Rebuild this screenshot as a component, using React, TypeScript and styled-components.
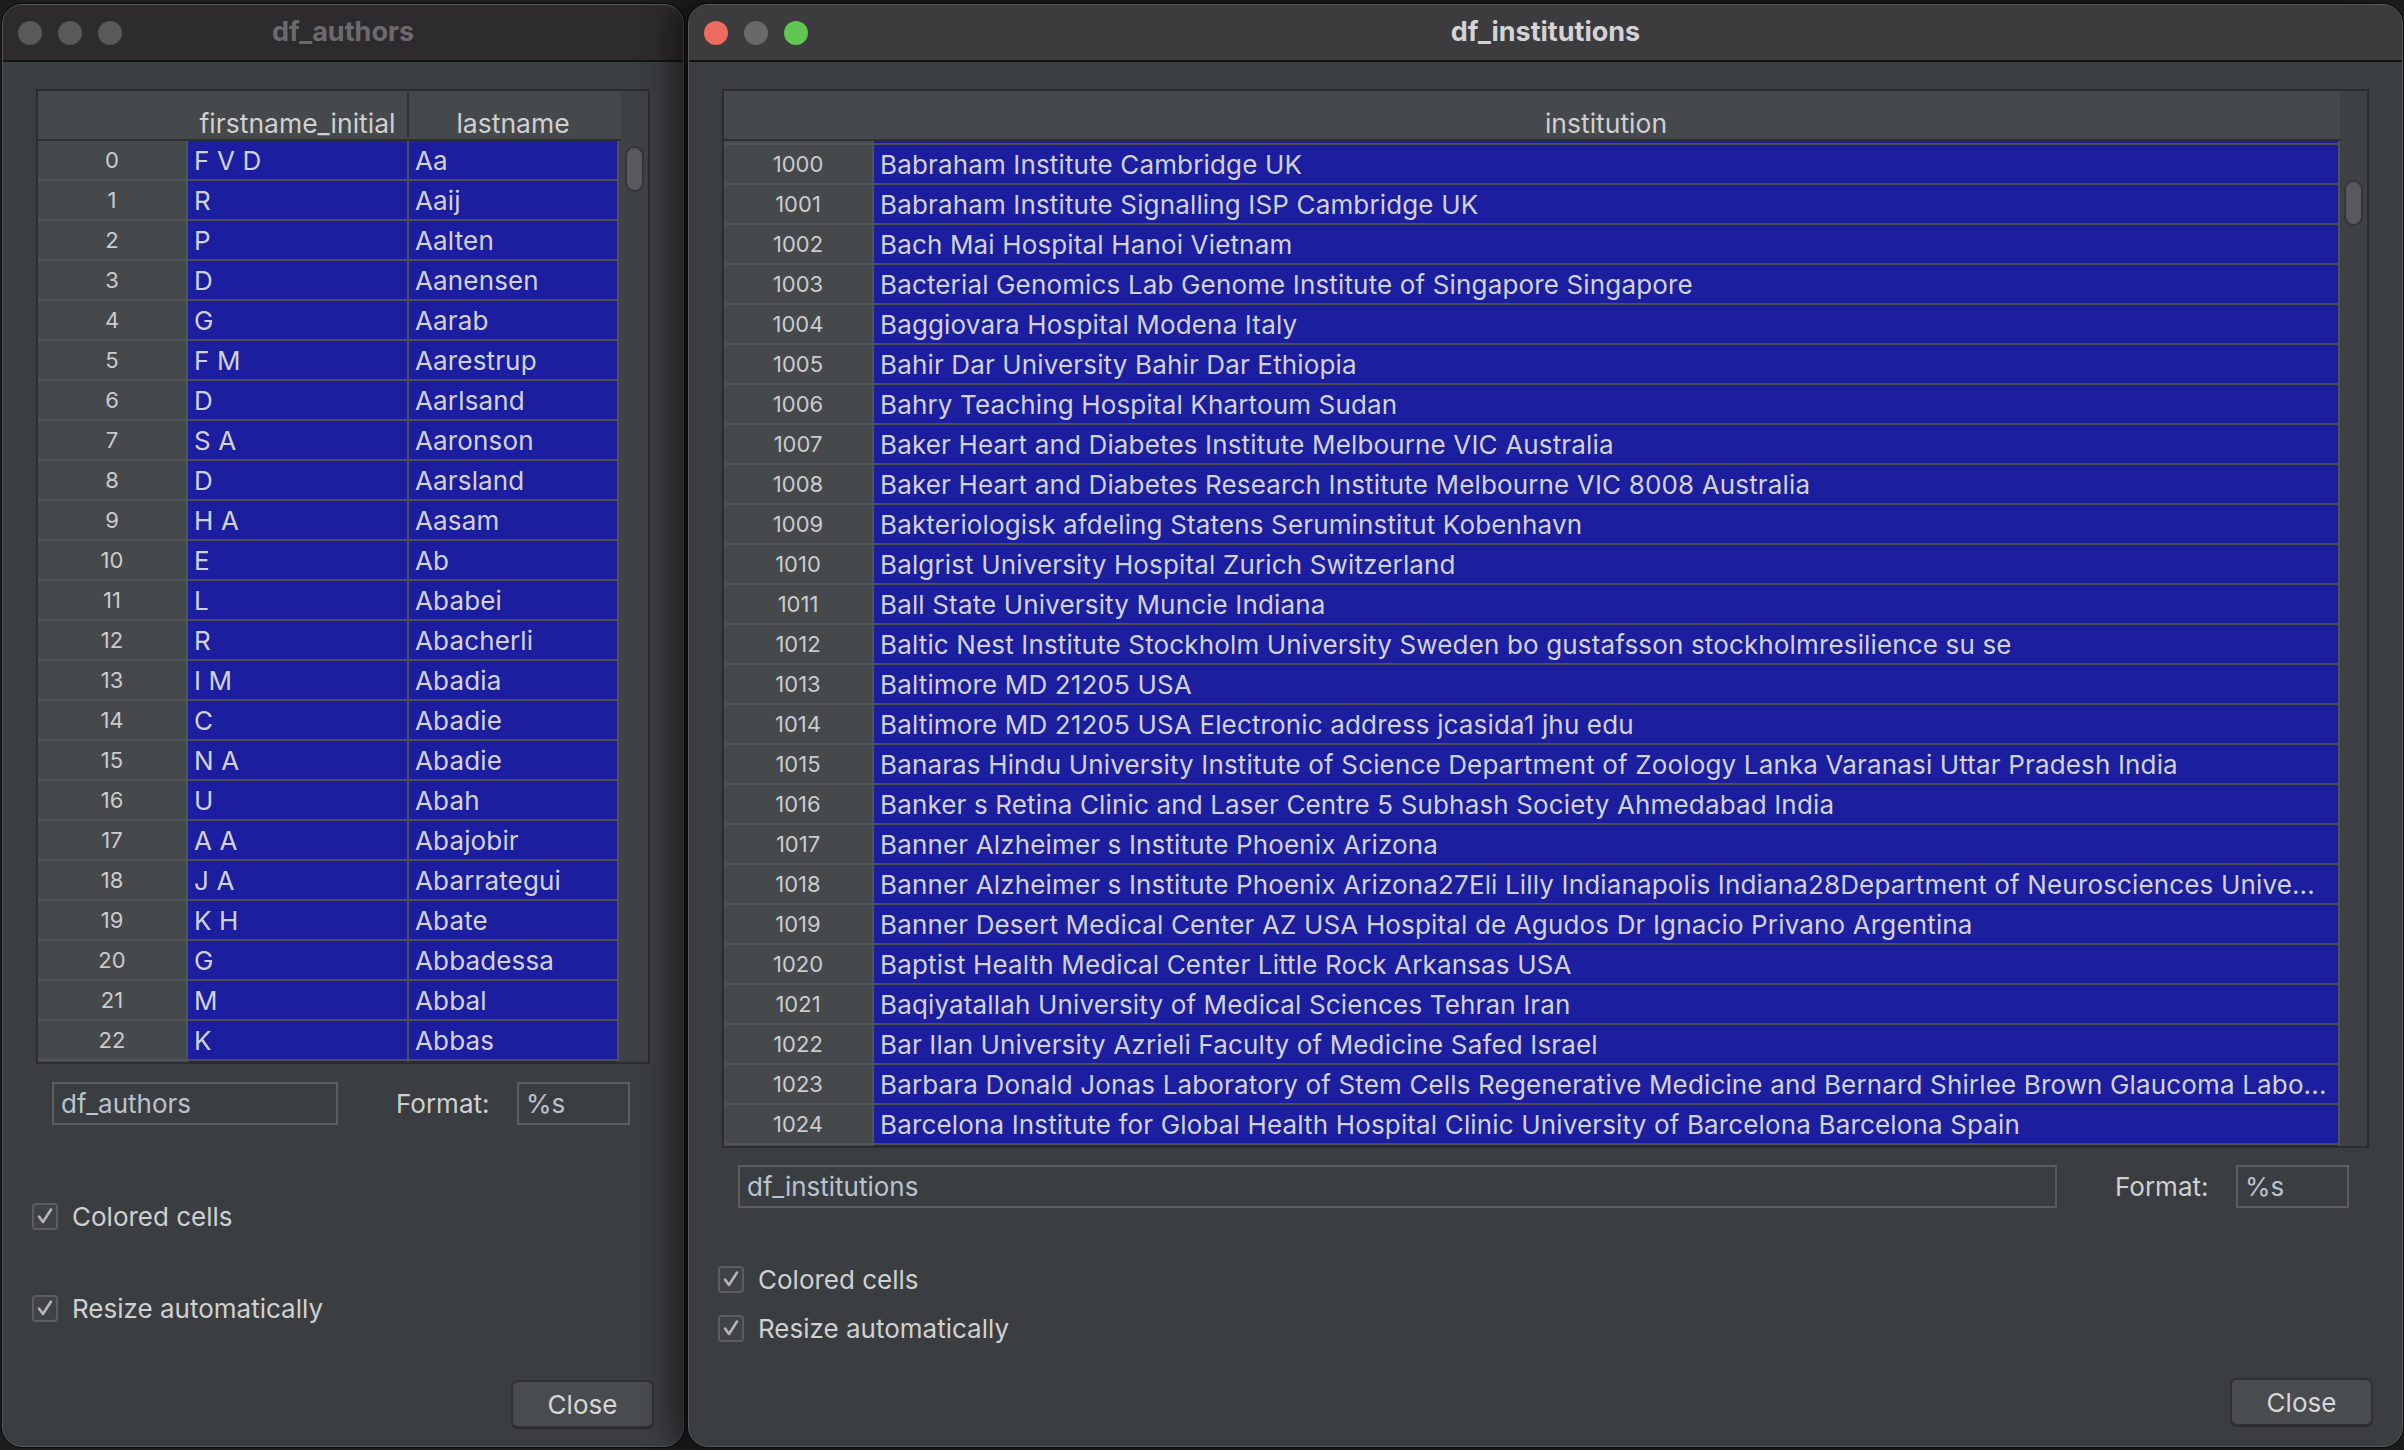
import React from "react";
import styled, { createGlobalStyle } from "styled-components";

const GlobalStyle = createGlobalStyle`
  html, body { margin: 0; padding: 0; background: #1c1c1e; }
  body { font-family: Inter, "Liberation Sans", sans-serif; -webkit-font-smoothing: antialiased; }
  * { box-sizing: border-box; }
`;

const FONT = `Inter, "Liberation Sans", sans-serif`;

const Desktop = styled.div`
  width: 2404px;
  height: 1450px;
  display: flex;
  align-items: flex-start;
  gap: 4px;
  padding: 4px 2px 0 2px;
  background: #1c1c1e;
  overflow: hidden;
`;

const Window = styled.div<{ $width: number; $active?: boolean }>`
  position: relative;
  z-index: ${(p) => (p.$active ? 2 : 1)};
  flex: 0 0 ${(p) => p.$width}px;
  height: 1443px;
  display: flex;
  flex-direction: column;
  background: #3b3e41;
  border: 1px solid #58585a;
  border-radius: 20px;
  overflow: hidden;
  box-shadow: 0 0 0 1px #0b0b0b
    ${(p) => (p.$active ? ", -18px 0 28px rgba(0,0,0,0.45)" : "")};
`;

const TitleBar = styled.div<{ $active?: boolean }>`
  flex: 0 0 57px;
  display: grid;
  grid-template-columns: 1fr auto 1fr;
  align-items: center;
  padding-left: 15px;
  background: ${(p) => (p.$active ? "#3c3b3e" : "#2e2b2f")};
  border-bottom: 2px solid #141414;
`;

const Lights = styled.div`
  display: flex;
  gap: 16px;
  align-items: center;
`;

const Light = styled.span<{ $color: string }>`
  width: 24px;
  height: 24px;
  border-radius: 50%;
  background: ${(p) => p.$color};
`;

const Title = styled.div<{ $active?: boolean }>`
  font-family: ${FONT};
  font-weight: 700;
  font-size: 27px;
  margin-top: -2px;
  color: ${(p) => (p.$active ? "#d4d4d6" : "#6d6a6e")};
  margin-left: -15px;
`;

const Body = styled.div`
  flex: 1;
  display: flex;
  flex-direction: column;
  padding: 27px 29px 0 29px;
`;

const Frame = styled.div<{ $height: number }>`
  height: ${(p) => p.$height}px;
  margin: 0 4px;
  border: 2px solid #2b2d30;
  display: flex;
  background: #3f4245;
`;

const TableMain = styled.div`
  flex: 1;
  display: flex;
  flex-direction: column;
  min-width: 0;
`;

const HeaderRow = styled.div<{ $cols: string }>`
  flex: 0 0 50px;
  display: grid;
  grid-template-columns: ${(p) => p.$cols};
  background: #45494c;
  border-bottom: 2px solid #2d3033;
`;

const HeaderCell = styled.div<{ $sep?: boolean }>`
  display: flex;
  align-items: flex-end;
  justify-content: center;
  line-height: 28px;
  font-family: ${FONT};
  font-size: 26.5px;
  color: #cfd0d1;
  white-space: nowrap;
  margin: 2px 0;
  border-right: 2px solid ${(p) => (p.$sep ? "#2f3235" : "transparent")};
`;

const Rows = styled.div`
  flex: 1;
  overflow: hidden;
`;

const RowsInner = styled.div<{ $offset: number }>`
  margin-top: ${(p) => -p.$offset}px;
`;

const Row = styled.div<{ $cols: string }>`
  display: grid;
  grid-template-columns: ${(p) => p.$cols};
  height: 40px;
`;

const IndexCell = styled.div`
  display: flex;
  align-items: center;
  justify-content: center;
  background: #45494c;
  border-bottom: 2px solid #515457;
  border-right: 2px solid #515457;
  font-family: ${FONT};
  font-size: 22px;
  color: #cacbcc;
`;

const DataCell = styled.div`
  display: flex;
  align-items: center;
  padding-left: 6px;
  background: #1c1ea0;
  border-bottom: 2px solid #505052;
  border-right: 2px solid #505052;
  font-family: ${FONT};
  font-size: 26px;
  letter-spacing: 0.15px;
  color: #d2d2d6;
  white-space: nowrap;
  overflow: hidden;
`;

const Track = styled.div`
  flex: 0 0 27px;
  background: #3f4245;
  padding-left: 4px;
`;

const Thumb = styled.div<{ $top: number }>`
  margin-top: ${(p) => p.$top}px;
  width: 19px;
  height: 46px;
  border-radius: 10px;
  background: #58595c;
  border: 2px solid #34363a;
`;

const FormRow = styled.div<{ $top: number }>`
  margin: ${(p) => p.$top}px 24px 0 20px;
  display: flex;
  align-items: center;
`;

const TextInput = styled.input`
  flex: 1;
  min-width: 0;
  height: 43px;
  background: transparent;
  border: 2px solid #5c5d5f;
  padding: 0 7px;
  font-family: ${FONT};
  font-size: 26px;
  color: #b8c3cf;
  outline: none;
`;

const FormatLabel = styled.span`
  margin-left: 58px;
  width: 92px;
  font-family: ${FONT};
  font-size: 26px;
  color: #cfd0d1;
  white-space: nowrap;
`;

const FormatInput = styled(TextInput)`
  flex: 0 0 113px;
  margin-left: 29px;
`;

const CheckRow = styled.label<{ $top: number }>`
  margin-top: ${(p) => p.$top}px;
  display: flex;
  align-items: center;
  gap: 14px;
  height: 26px;
  font-family: ${FONT};
  font-size: 26px;
  color: #cfd0d1;
`;

const Box = styled.span`
  width: 26px;
  height: 27px;
  border: 2px solid #5b5e61;
  border-radius: 4px;
  background: #404346;
  display: flex;
  align-items: center;
  justify-content: center;
`;

const Footer = styled.div<{ $top: number }>`
  margin-top: ${(p) => p.$top}px;
  display: flex;
  justify-content: flex-end;
`;

const CloseButton = styled.button`
  width: 143px;
  height: 48px;
  background: #494c4f;
  border: 2px solid #2f3134;
  border-radius: 7px;
  font-family: ${FONT};
  font-size: 26px;
  color: #d6d6d8;
  box-shadow: 0 1px 0 rgba(0,0,0,0.35);
`;

const Check = () => (
  <svg width="18" height="18" viewBox="0 0 18 18">
    <path d="M3 9.5 L7 15 L15 2.5" fill="none" stroke="#b4b5b7" strokeWidth="2.6" strokeLinecap="round" strokeLinejoin="round" />
  </svg>
);

const Checkbox = ({ label, top }: { label: string; top: number }) => (
  <CheckRow $top={top}>
    <Box>
      <Check />
    </Box>
    {label}
  </CheckRow>
);

type TableProps = {
  cols: string;
  headers: string[];
  rows: { idx: string; cells: string[] }[];
  offset: number;
  height: number;
  thumbTop: number;
};

const DataTable = ({ cols, headers, rows, offset, height, thumbTop }: TableProps) => (
  <Frame $height={height}>
    <TableMain>
      <HeaderRow $cols={cols}>
        <HeaderCell />
        {headers.map((h, i) => (
          <HeaderCell key={h} $sep={i < headers.length - 1}>
            {h}
          </HeaderCell>
        ))}
      </HeaderRow>
      <Rows>
        <RowsInner $offset={offset}>
          {rows.map((r, ri) => (
            <Row key={ri} $cols={cols}>
              <IndexCell>{r.idx}</IndexCell>
              {r.cells.map((c, i) => (
                <DataCell key={i}>{c}</DataCell>
              ))}
            </Row>
          ))}
        </RowsInner>
      </Rows>
    </TableMain>
    <Track>
      <Thumb $top={thumbTop} />
    </Track>
  </Frame>
);

const authors: [string, string][] = [
  ["F V D", "Aa"], ["R", "Aaij"], ["P", "Aalten"], ["D", "Aanensen"], ["G", "Aarab"],
  ["F M", "Aarestrup"], ["D", "Aarlsand"], ["S A", "Aaronson"], ["D", "Aarsland"], ["H A", "Aasam"],
  ["E", "Ab"], ["L", "Ababei"], ["R", "Abacherli"], ["I M", "Abadia"], ["C", "Abadie"],
  ["N A", "Abadie"], ["U", "Abah"], ["A A", "Abajobir"], ["J A", "Abarrategui"], ["K H", "Abate"],
  ["G", "Abbadessa"], ["M", "Abbal"], ["K", "Abbas"], ["", ""],
];

const institutions: string[] = [
  "",
  "Babraham Institute Cambridge UK",
  "Babraham Institute Signalling ISP Cambridge UK",
  "Bach Mai Hospital Hanoi Vietnam",
  "Bacterial Genomics Lab Genome Institute of Singapore Singapore",
  "Baggiovara Hospital Modena Italy",
  "Bahir Dar University Bahir Dar Ethiopia",
  "Bahry Teaching Hospital Khartoum Sudan",
  "Baker Heart and Diabetes Institute Melbourne VIC Australia",
  "Baker Heart and Diabetes Research Institute Melbourne VIC 8008 Australia",
  "Bakteriologisk afdeling Statens Seruminstitut Kobenhavn",
  "Balgrist University Hospital Zurich Switzerland",
  "Ball State University Muncie Indiana",
  "Baltic Nest Institute Stockholm University Sweden bo gustafsson stockholmresilience su se",
  "Baltimore MD 21205 USA",
  "Baltimore MD 21205 USA Electronic address jcasida1 jhu edu",
  "Banaras Hindu University Institute of Science Department of Zoology Lanka Varanasi Uttar Pradesh India",
  "Banker s Retina Clinic and Laser Centre 5 Subhash Society Ahmedabad India",
  "Banner Alzheimer s Institute Phoenix Arizona",
  "Banner Alzheimer s Institute Phoenix Arizona27Eli Lilly Indianapolis Indiana28Department of Neurosciences Unive...",
  "Banner Desert Medical Center AZ USA Hospital de Agudos Dr Ignacio Privano Argentina",
  "Baptist Health Medical Center Little Rock Arkansas USA",
  "Baqiyatallah University of Medical Sciences Tehran Iran",
  "Bar Ilan University Azrieli Faculty of Medicine Safed Israel",
  "Barbara Donald Jonas Laboratory of Stem Cells Regenerative Medicine and Bernard Shirlee Brown Glaucoma Labo...",
  "Barcelona Institute for Global Health Hospital Clinic University of Barcelona Barcelona Spain",
  "",
];

const authorRows = authors.map((a, i) => ({ idx: a[0] === "" ? "" : String(i), cells: [a[0], a[1]] }));
const instRows = institutions.map((t, i) => ({ idx: t === "" ? "" : String(999 + i), cells: [t] }));

export default function App() {
  return (
    <>
      <GlobalStyle />
      <Desktop>
        <Window $width={682}>
          <TitleBar>
            <Lights>
              <Light $color="#5a585b" />
              <Light $color="#5a585b" />
              <Light $color="#5a585b" />
            </Lights>
            <Title>df_authors</Title>
            <span />
          </TitleBar>
          <Body>
            <DataTable
              cols="150px 221px 210px"
              headers={["firstname_initial", "lastname"]}
              rows={authorRows}
              offset={0}
              height={975}
              thumbTop={55}
            />
            <FormRow $top={18}>
              <TextInput readOnly value="df_authors" />
              <FormatLabel>Format:</FormatLabel>
              <FormatInput readOnly value="%s" />
            </FormRow>
            <Checkbox label="Colored cells" top={78} />
            <Checkbox label="Resize automatically" top={66} />
            <Footer $top={59}>
              <CloseButton>Close</CloseButton>
            </Footer>
          </Body>
        </Window>
        <Window $width={1715} $active>
          <TitleBar $active>
            <Lights>
              <Light $color="#ed6a5e" />
              <Light $color="#69686b" />
              <Light $color="#61c554" />
            </Lights>
            <Title $active>df_institutions</Title>
            <span />
          </TitleBar>
          <Body>
            <DataTable
              cols="150px 1fr"
              headers={["institution"]}
              rows={instRows}
              offset={36}
              height={1059}
              thumbTop={89}
            />
            <FormRow $top={17}>
              <TextInput readOnly value="df_institutions" />
              <FormatLabel>Format:</FormatLabel>
              <FormatInput readOnly value="%s" />
            </FormRow>
            <Checkbox label="Colored cells" top={58} />
            <Checkbox label="Resize automatically" top={23} />
            <Footer $top={37}>
              <CloseButton>Close</CloseButton>
            </Footer>
          </Body>
        </Window>
      </Desktop>
    </>
  );
}
